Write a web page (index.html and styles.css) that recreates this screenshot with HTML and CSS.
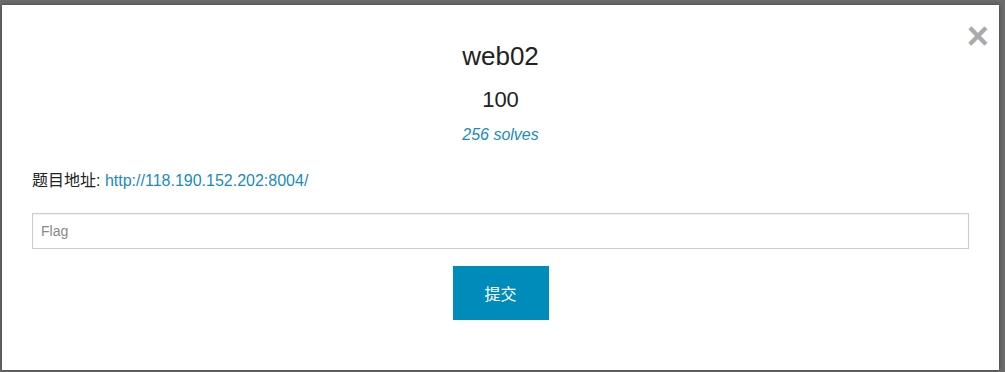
FILE: index.html
```html
<!DOCTYPE html>
<html lang="zh-CN">
<head>
  <meta charset="UTF-8" />
  <meta name="viewport" content="width=device-width, initial-scale=1.0" />
  <title>web02</title>
  <link rel="stylesheet" href="styles.css">
</head>
<body>
  <div class="modal">
    <a href="#" class="close-modal">&#215;</a>
    <h2 class="chal-name">web02</h2>
    <h3 class="chal-value">100</h3>
    <p class="chal-solves">256 solves</p>
    <p class="chal-desc">题目地址: <a href="#">http://118.190.152.202:8004/</a></p>
    <form class="flag-form">
      <input type="text" class="flag-input" placeholder="Flag">
      <button type="button" class="submit-btn">提交</button>
    </form>
  </div>
</body>
</html>
```

FILE: styles.css
```css
html, body {
  height: 100%;
}
body {
  margin: 0;
  background: #6c6c6c;
  font-family: "Liberation Sans", Arial, "Noto Sans CJK SC", sans-serif;
  color: #222;
}
.modal {
  position: relative;
  box-sizing: border-box;
  height: 365px;
  margin: 5px 6px 0 2px;
  padding: 33px 30px 0;
  background: #fff;
  box-shadow: 0 0 4px rgba(0,0,0,0.45);
}
.close-modal {
  position: absolute;
  top: 12px;
  right: 10px;
  font-size: 38px;
  line-height: 1;
  font-weight: bold;
  color: #aaa;
  text-decoration: none;
}
.chal-name {
  margin: 0;
  text-align: center;
  font-size: 26px;
  font-weight: normal;
  line-height: 36px;
}
.chal-value {
  margin: 10px 0 0;
  text-align: center;
  font-size: 22px;
  font-weight: normal;
  line-height: 31px;
}
.chal-solves {
  margin: 9px 0 0;
  text-align: center;
  font-size: 16px;
  font-style: italic;
  line-height: 22px;
  color: #1a8bbd;
}
.chal-desc {
  margin: 24px 0 0;
  font-size: 16px;
  line-height: 22px;
}
.chal-desc a {
  color: #1a8bbd;
  text-decoration: none;
}
.flag-form {
  display: flex;
  flex-direction: column;
  align-items: center;
  margin-top: 21px;
}
.flag-input {
  box-sizing: border-box;
  width: 100%;
  height: 36px;
  padding: 0 8px;
  border: 1px solid #ccc;
  font-family: inherit;
  font-size: 14px;
  color: #333;
  box-shadow: inset 0 1px 2px rgba(0,0,0,0.06);
}
.flag-input::placeholder {
  color: #888;
}
.submit-btn {
  margin-top: 17px;
  width: 96px;
  height: 54px;
  border: none;
  background: #008cba;
  color: #fff;
  font-family: inherit;
  font-size: 16px;
  cursor: pointer;
}
```
